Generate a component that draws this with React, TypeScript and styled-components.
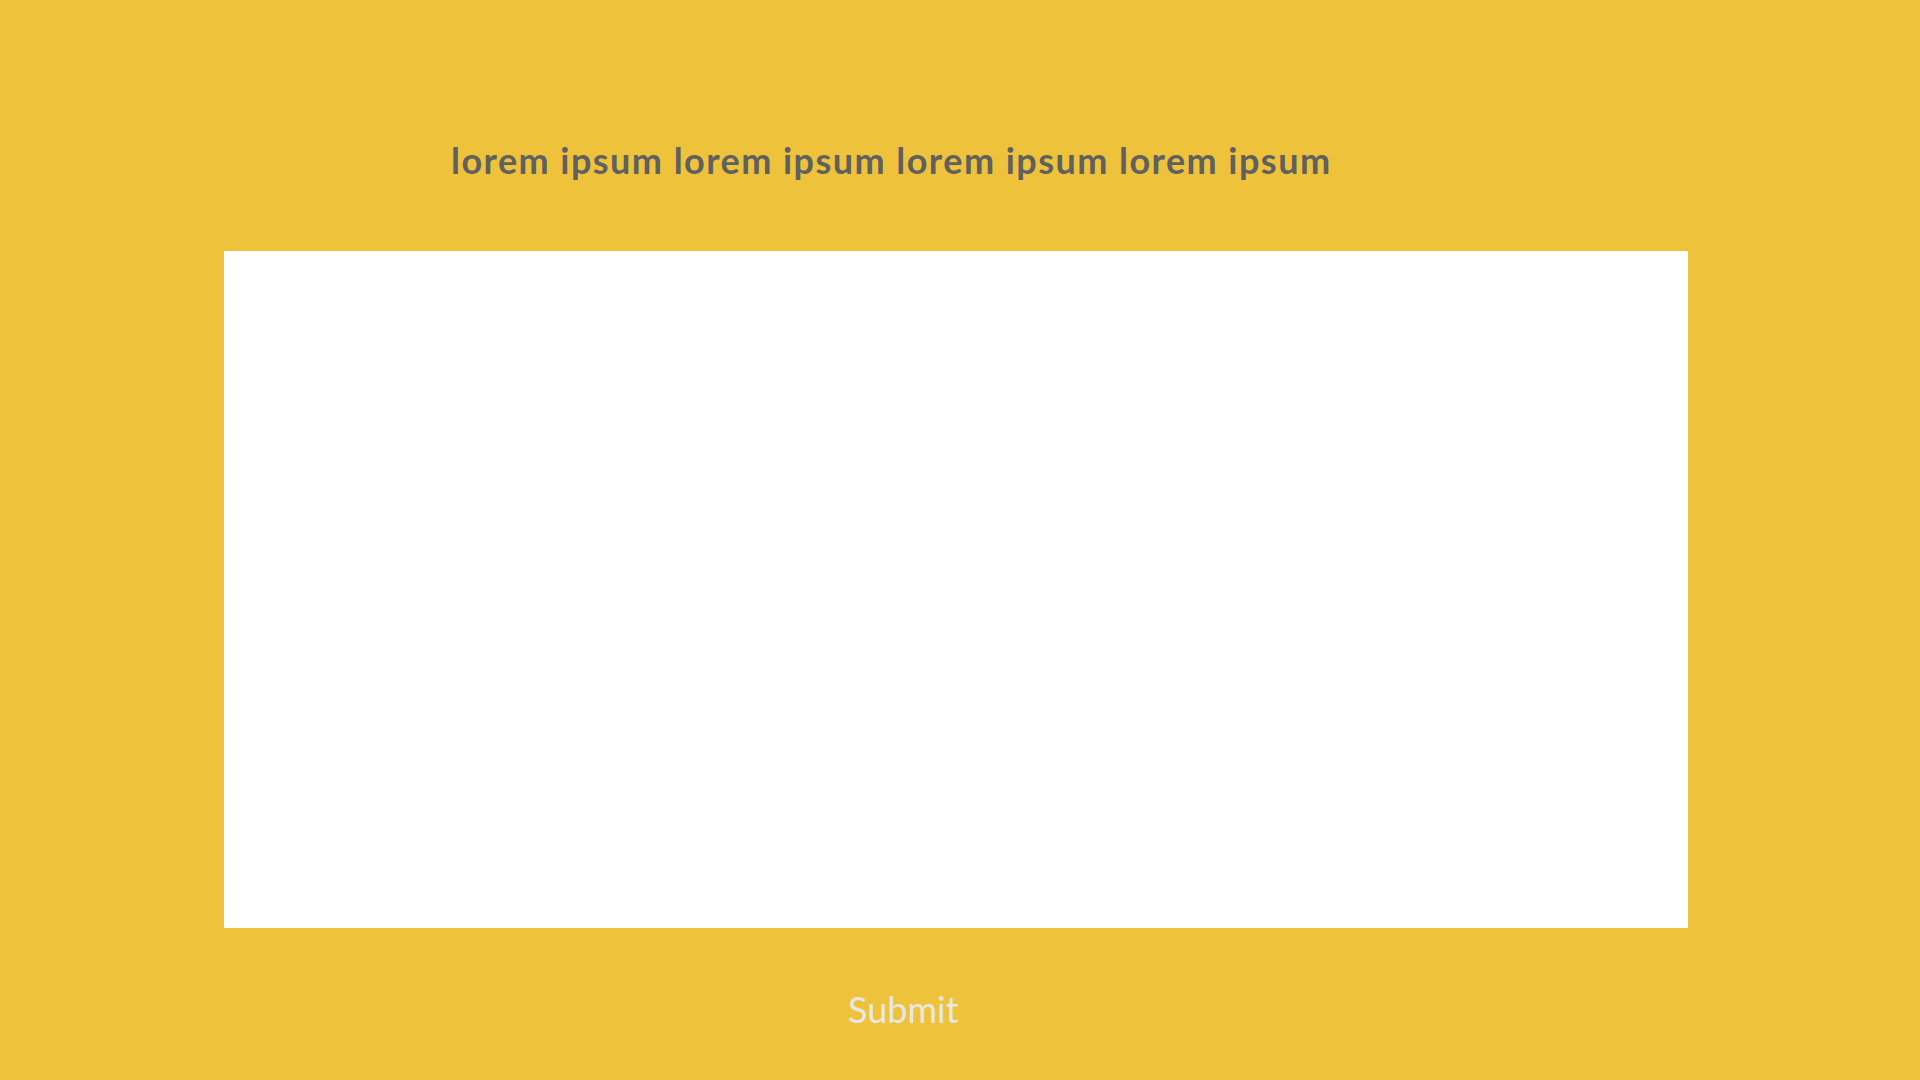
import React from "react";
import styled, { createGlobalStyle } from "styled-components";

const Global = createGlobalStyle`
  html, body { margin: 0; padding: 0; background: #eec33b; }
  body { font-family: Lato, "Open Sans", sans-serif; }
`;

const Page = styled.div`
  width: 1920px;
  height: 1080px;
  background: #eec33b;
  display: flex;
  flex-direction: column;
  box-sizing: border-box;
  padding-top: 138px;
`;

const Heading = styled.h1`
  margin: 0 0 0 451px;
  font-family: Lato, sans-serif;
  font-weight: 700;
  font-size: 36px;
  line-height: 44px;
  color: #606060;
  letter-spacing: 1.45px;
`;

const Board = styled.div`
  margin: 69px 0 0 224px;
  width: 1464px;
  height: 677px;
  background: #ffffff;
`;

const SubmitButton = styled.button`
  align-self: flex-start;
  margin: 58px 0 0 848px;
  padding: 0;
  border: none;
  background: transparent;
  font-family: Lato, sans-serif;
  font-weight: 400;
  font-size: 36px;
  line-height: 46px;
  color: #e8e8e8;
  cursor: pointer;
`;

export default function App() {
  return (
    <>
      <Global />
      <Page>
        <Heading>lorem ipsum lorem ipsum lorem ipsum lorem ipsum</Heading>
        <Board />
        <SubmitButton>Submit</SubmitButton>
      </Page>
    </>
  );
}
